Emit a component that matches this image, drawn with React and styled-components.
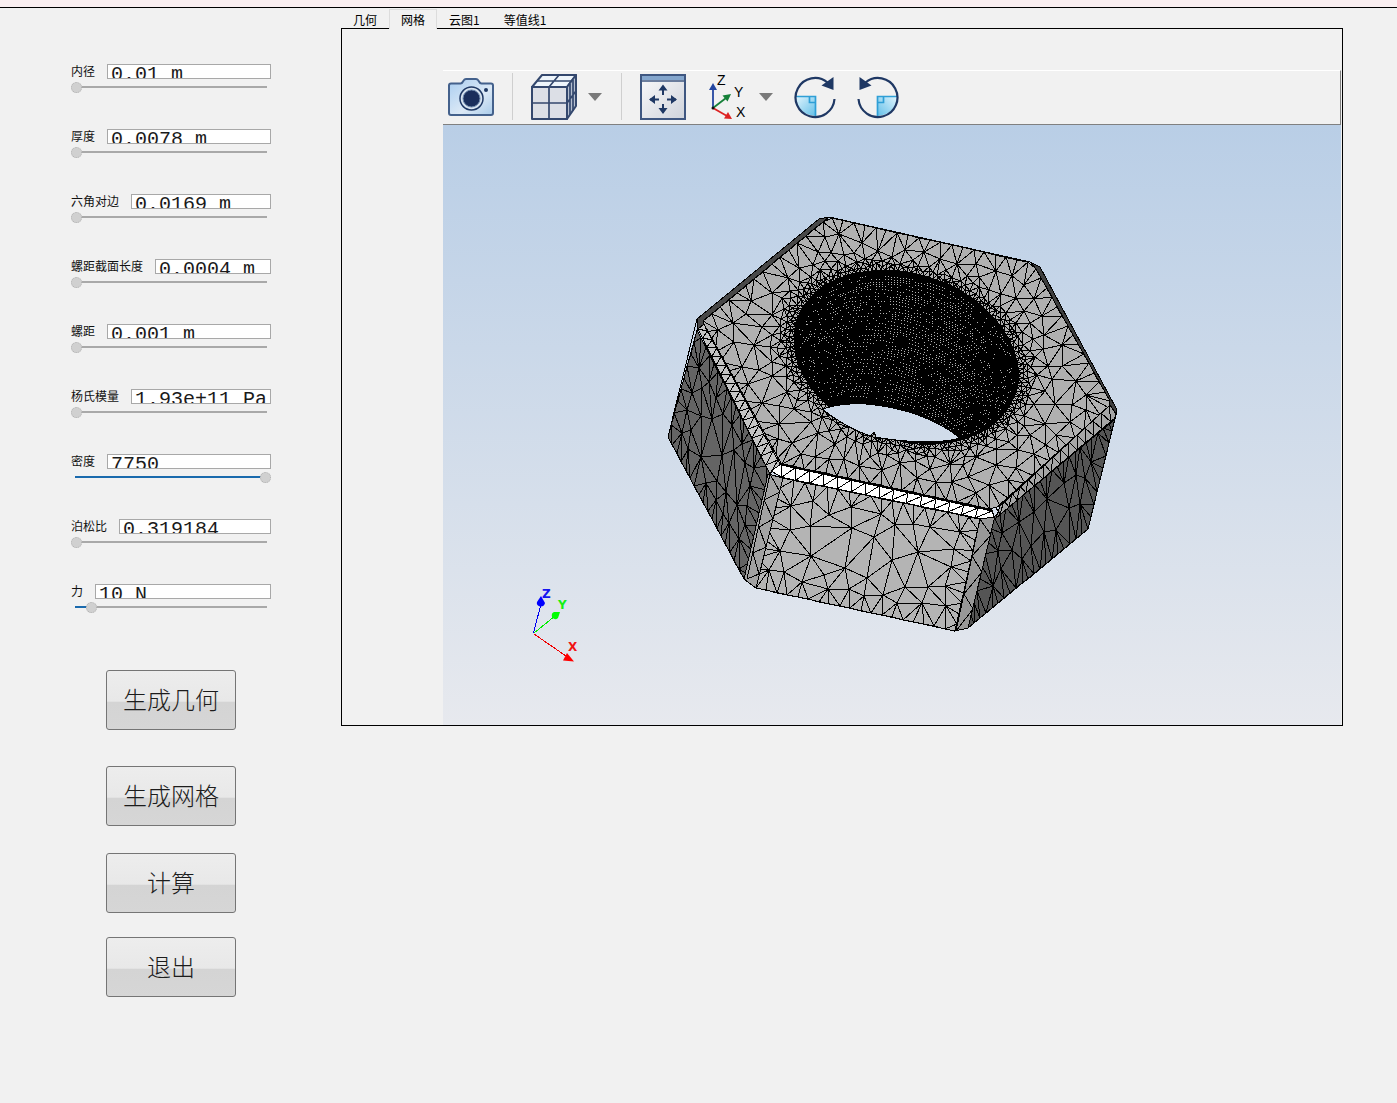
import React from "react";
import styled, { createGlobalStyle } from "styled-components";

const ui = `"Noto Sans CJK SC", "Liberation Sans", sans-serif`;

const GlobalStyle = createGlobalStyle`
  * { box-sizing: border-box; }
  body { margin: 0; background: #f1f1f1; color: #111; font: 12px/16px ${ui}; }
  button, input { font-family: inherit; margin: 0; }
`;

/* ---------- mesh generation ---------- */

function makeRandom(seed) {
  let s = seed;
  return () => {
    s = (s * 1664525 + 1013904223) >>> 0;
    return s / 4294967296;
  };
}

const HOLE = { x: 906, y: 357, a: 115, b: 83, t: (19 * Math.PI) / 180 };

function holePoint(angle, scale = 1, dx = 0, dy = 0) {
  const u = HOLE.a * scale * Math.cos(angle);
  const v = HOLE.b * scale * Math.sin(angle);
  const c = Math.cos(HOLE.t);
  const s = Math.sin(HOLE.t);
  return [HOLE.x + dx + u * c - v * s, HOLE.y + dy + u * s + v * c];
}

function holeRatio(x, y) {
  const c = Math.cos(HOLE.t);
  const s = Math.sin(HOLE.t);
  const dx = x - HOLE.x;
  const dy = y - HOLE.y;
  return Math.hypot((dx * c + dy * s) / HOLE.a, (dy * c - dx * s) / HOLE.b);
}

function inside(poly, x, y) {
  let hit = false;
  for (let i = 0, j = poly.length - 1; i < poly.length; j = i++) {
    const [xi, yi] = poly[i];
    const [xj, yj] = poly[j];
    if (yi > y !== yj > y && x < ((xj - xi) * (y - yi)) / (yj - yi) + xi) hit = !hit;
  }
  return hit;
}

function edgeDistance(poly, x, y) {
  let best = Infinity;
  for (let i = 0, j = poly.length - 1; i < poly.length; j = i++) {
    const [ax, ay] = poly[j];
    const [bx, by] = poly[i];
    const l = (bx - ax) ** 2 + (by - ay) ** 2;
    const t = Math.max(0, Math.min(1, ((x - ax) * (bx - ax) + (y - ay) * (by - ay)) / l));
    best = Math.min(best, Math.hypot(x - ax - t * (bx - ax), y - ay - t * (by - ay)));
  }
  return best;
}

/* Sweep-line Delaunay triangulation */
function circum(p, i, j, k) {
  const [ax, ay] = p[i];
  const [bx, by] = p[j];
  const [cx, cy] = p[k];
  const d = 2 * (ax * (by - cy) + bx * (cy - ay) + cx * (ay - by)) || 1e-9;
  const a2 = ax * ax + ay * ay;
  const b2 = bx * bx + by * by;
  const c2 = cx * cx + cy * cy;
  const x = (a2 * (by - cy) + b2 * (cy - ay) + c2 * (ay - by)) / d;
  const y = (a2 * (cx - bx) + b2 * (ax - cx) + c2 * (bx - ax)) / d;
  return { i, j, k, x, y, r: (ax - x) ** 2 + (ay - y) ** 2 };
}

function delaunay(points) {
  const n = points.length;
  const p = points.concat([[-20000, -10000], [900, 30000], [22000, -10000]]);
  const order = points.map((_, i) => i).sort((a, b) => p[a][0] - p[b][0]);
  let open = [circum(p, n, n + 1, n + 2)];
  const closed = [];
  for (const c of order) {
    const [x, y] = p[c];
    const edges = new Map();
    const keep = [];
    for (const t of open) {
      const dx = x - t.x;
      if (dx > 0 && dx * dx > t.r) {
        closed.push(t);
        continue;
      }
      if (dx * dx + (y - t.y) ** 2 - t.r > 1e-7) {
        keep.push(t);
        continue;
      }
      for (const [a, b] of [[t.i, t.j], [t.j, t.k], [t.k, t.i]]) {
        const key = Math.min(a, b) * 100000 + Math.max(a, b);
        if (edges.has(key)) edges.set(key, null);
        else edges.set(key, [a, b]);
      }
    }
    open = keep;
    edges.forEach((e) => e && open.push(circum(p, e[0], e[1], c)));
  }
  return closed.concat(open).filter((t) => t.i < n && t.j < n && t.k < n);
}

function meshPath({ poly, size, sx = 1, sy = 1, hole = false, seed = 7, tries = 9000 }) {
  const rnd = makeRandom(seed);
  const pts = [];
  const cells = new Map();
  const cell = 8;
  const add = (x, y) => {
    const q = [x * sx + rnd() * 0.01, y * sy + rnd() * 0.01];
    pts.push(q);
    const key = Math.floor(q[0] / cell) + "," + Math.floor(q[1] / cell);
    if (!cells.has(key)) cells.set(key, []);
    cells.get(key).push(q);
  };
  const free = (x, y, h) => {
    const qx = x * sx;
    const qy = y * sy;
    const cx = Math.floor(qx / cell);
    const cy = Math.floor(qy / cell);
    const m = Math.ceil(h / cell);
    for (let i = cx - m; i <= cx + m; i++)
      for (let j = cy - m; j <= cy + m; j++)
        for (const q of cells.get(i + "," + j) || [])
          if ((q[0] - qx) ** 2 + (q[1] - qy) ** 2 < h * h) return false;
    return true;
  };
  poly.forEach(([ax, ay], i) => {
    const [bx, by] = poly[(i + 1) % poly.length];
    const len = Math.hypot((bx - ax) * sx, (by - ay) * sy);
    const count = Math.max(1, Math.round(len / size((ax + bx) / 2, (ay + by) / 2)));
    for (let k = 0; k < count; k++) add(ax + ((bx - ax) * k) / count, ay + ((by - ay) * k) / count);
  });
  if (hole) for (let i = 0; i < 160; i++) add(...holePoint((i / 160) * Math.PI * 2));
  const xs = poly.map((q) => q[0]);
  const ys = poly.map((q) => q[1]);
  const x0 = Math.min(...xs);
  const y0 = Math.min(...ys);
  const w = Math.max(...xs) - x0;
  const h = Math.max(...ys) - y0;
  for (let i = 0; i < tries; i++) {
    const x = x0 + rnd() * w;
    const y = y0 + rnd() * h;
    if (!inside(poly, x, y) || (hole && holeRatio(x, y) < 1.01)) continue;
    const s = size(x, y);
    if (edgeDistance(poly, x, y) * Math.min(sx, sy) < s * 0.55) continue;
    if (free(x, y, s * 0.88)) add(x, y);
  }
  const seen = new Set();
  let d = "";
  for (const t of delaunay(pts)) {
    const gx = (pts[t.i][0] + pts[t.j][0] + pts[t.k][0]) / 3 / sx;
    const gy = (pts[t.i][1] + pts[t.j][1] + pts[t.k][1]) / 3 / sy;
    if (!inside(poly, gx, gy) || (hole && holeRatio(gx, gy) < 1)) continue;
    for (const [a, b] of [[t.i, t.j], [t.j, t.k], [t.k, t.i]]) {
      const key = Math.min(a, b) * 100000 + Math.max(a, b);
      if (seen.has(key)) continue;
      seen.add(key);
      const r = (q) => Math.round(q[0] / sx) + " " + Math.round(q[1] / sy);
      d += "M" + r(pts[a]) + "L" + r(pts[b]);
    }
  }
  return d;
}

/* Zigzag of triangles between two edges */
function stripPath(a0, a1, b0, b1, count) {
  const at = (p, q, t) => Math.round(p[0] + (q[0] - p[0]) * t) + " " + Math.round(p[1] + (q[1] - p[1]) * t);
  let d = "M" + at(a0, a1, 0) + "L" + at(a0, a1, 1) + "M" + at(b0, b1, 0) + "L" + at(b0, b1, 1);
  for (let i = 0; i < count; i++) {
    d += "M" + at(a0, a1, i / count) + "L" + at(b0, b1, (i + 0.5) / count) + "L" + at(a0, a1, (i + 1) / count);
  }
  return d;
}

function threadDots() {
  const rnd = makeRandom(21);
  let d = "";
  for (let k = 2; k < 46; k++) {
    const t = k / 46;
    const scale = 1 - 0.08 * t;
    const count = 236 - k;
    for (let i = 0; i < count; i++) {
      const a = (i / count) * Math.PI * 2 + k * 0.013;
      const [x, y] = holePoint(a, scale, -30 * t, 122 * t + Math.sin(a * 7 + k) * 0.8);
      if (holeRatio(x, y) > 0.965) continue;
      if (Math.sin(a + HOLE.t) > 0.35) continue;
      const side = Math.min(1, (x - 795) / 100) * Math.min(1, (1018 - x) / 70);
      const wave = 0.78 + 0.22 * Math.sin(x * 0.11 + y * 0.17 + Math.sin(y * 0.09) * 2);
      if (rnd() > (0.14 + 0.76 * side) * wave) continue;
      d += "M" + Math.round(x) + " " + Math.round(y) + "h1v1h-1z";
    }
  }
  return d;
}

const TOP = [[703, 321], [823, 222], [832, 218], [1028, 262], [1036, 269], [1110, 401], [1109, 408], [1000, 506], [990, 509], [782, 464], [775, 461], [704, 332]];
const LEFT = [[697, 330], [770, 474], [766, 490], [747, 574], [743, 577], [668, 437]];
const FRONT = [[783, 478], [980, 519], [957, 624], [955, 631], [756, 588], [750, 578]];
const RIGHT = [[994, 517], [1115, 419], [1088, 529], [968, 628]];
const CORNER_L = [[768, 474], [783, 478], [756, 588], [744, 579]];
const CORNER_R = [[980, 519], [995, 516], [968, 628], [955, 631]];

const faceSize = (poly, low, high) => (x, y) => Math.min(high, low + edgeDistance(poly, x, y) * 0.4);

const faces = [
  { poly: [[697, 319], [819, 219], [829, 217], [823, 222], [703, 321], [704, 332], [698, 330]], fill: "#484848" },
  { poly: [[1030, 262], [1040, 267], [1116, 408], [1116, 414], [1110, 407], [1036, 269]], fill: "#3f3f3f" },
  {
    poly: LEFT,
    fill: "#646464",
    d: meshPath({ poly: LEFT, sx: 1.8, sy: 0.7, size: faceSize(LEFT, 10, 23), seed: 11 }),
  },
  {
    poly: FRONT,
    fill: "#b4b4b4",
    d: meshPath({ poly: FRONT, size: faceSize(FRONT, 11, 29), seed: 5 }),
  },
  {
    poly: RIGHT,
    fill: "#555555",
    d: meshPath({ poly: RIGHT, sx: 1.6, sy: 0.7, size: faceSize(RIGHT, 10, 23), seed: 31 }),
  },
  { poly: CORNER_L, fill: "#a2a2a2", d: stripPath([770, 474], [747, 579], [783, 478], [756, 588], 4) },
  { poly: CORNER_R, fill: "#989898", d: stripPath([980, 519], [956, 631], [995, 516], [968, 628], 3) },
  {
    poly: TOP,
    fill: "#b0b0b0",
    d: meshPath({
      poly: TOP,
      hole: true,
      seed: 3,
      tries: 90000,
      size: (x, y) => {
        const grow = 4 + Math.max(0, holeRatio(x, y) - 1.06) * 48;
        const rim = 11 + edgeDistance(TOP, x, y) * 0.35;
        return Math.min(grow, rim, 18);
      },
    }),
  },
  {
    poly: [[698, 329], [704, 324], [781, 463], [770, 474]],
    fill: "#c4c4c4",
    d: stripPath([698, 329], [770, 474], [705, 327], [780, 464], 16),
  },
  {
    poly: [[1000, 506], [1110, 405], [1116, 414], [1114, 420], [996, 518]],
    fill: "#a6a6a6",
    d: stripPath([996, 508], [1109, 406], [996, 518], [1115, 418], 14),
  },
  {
    poly: [[781, 464], [992, 510], [994, 517], [980, 519], [783, 478], [771, 471]],
    fill: "#ffffff",
    d: stripPath([781, 465], [992, 511], [775, 476], [982, 519], 15),
  },
];

const OUTLINE =
  "M697 319L819 219L829 217L1030 262L1040 267L1116 408L1116 414L1088 529L968 628L955 631L756 588L744 579L668 437Z";
const OPENING =
  "M822 409C835 405 850 403 866 404C904 407 938 420 960 438C950 441 935 442 920 442C905 441 890 440 876 437L874 432L870 436C850 429 836 420 822 409Z";
const DOTS = threadDots();

function Model() {
  return (
    <Scene viewBox="443 125 898 600" role="img" aria-label="网格">
      <defs>
        <linearGradient id="sky" gradientUnits="userSpaceOnUse" x1="0" y1="125" x2="0" y2="725">
          <stop offset="0" stopColor="#b9cee6" />
          <stop offset="1" stopColor="#e7e9ee" />
        </linearGradient>
      </defs>
      <g shapeRendering="crispEdges" strokeWidth="1">
        {faces.map((f, i) => (
          <g key={i}>
            <polygon points={f.poly.join(" ")} fill={f.fill} stroke="#000" />
            {f.d && <path d={f.d} fill="none" stroke="#000" />}
          </g>
        ))}
        <ellipse
          cx={HOLE.x}
          cy={HOLE.y}
          rx={HOLE.a}
          ry={HOLE.b}
          transform={`rotate(19 ${HOLE.x} ${HOLE.y})`}
          fill="#000"
        />
        <path d={DOTS} fill="#b2b2b2" />
        <path d={OPENING} fill="url(#sky)" stroke="#000" />
        <path d={OUTLINE} fill="none" stroke="#000" />
        <path d="M533.5 633L541 604" stroke="#0000f0" />
        <path d="M534 633L555 616" stroke="#00f000" />
        <path d="M534 634L566 656" stroke="#f00000" />
      </g>
      <path d="M541 596L545 603Q544 607 540 606.500Q536 605 537 602Z" fill="#0000ff" />
      <path d="M560 612L558 618Q555 621 552 617Q551 613 554 612Z" fill="#00ff00" />
      <path d="M574 661.500L563 660.500L567 653Z" fill="#ff0000" />
      <AxisText x="542" y="598" fill="#1414f0">Z</AxisText>
      <AxisText x="558" y="609" fill="#14f014">Y</AxisText>
      <AxisText x="568" y="651" fill="#f01414">X</AxisText>
    </Scene>
  );
}

/* ---------- toolbar icons ---------- */

const NAVY = "#1f3864";

const CameraIcon = () => (
  <svg width="46" height="46" viewBox="0 0 46 46" fill="none">
    <defs>
      <linearGradient id="cam" x1="0" y1="0" x2="1" y2="1">
        <stop offset="0" stopColor="#a9cdf0" />
        <stop offset="0.6" stopColor="#dce9f6" />
        <stop offset="1" stopColor="#a9cbea" />
      </linearGradient>
    </defs>
    <path d="M3 9.500h9.500q1.500 0 2.500-2l1-1.500q.5-1 2-1h10q1.500 0 2 1l1 1.500q1 2 2.500 2H43q2 0 2 2V39q0 2-2 2H3q-2 0-2-2V11.500q0-2 2-2z" fill="url(#cam)" stroke="#44618c" strokeWidth="2" />
    <circle cx="23.500" cy="24.500" r="11.500" fill="#d8e4f0" stroke={NAVY} strokeWidth="1.500" />
    <circle cx="23.500" cy="24.500" r="8.500" fill="#1b2f5c" stroke="#6d88ab" strokeWidth="1" />
    <circle cx="38" cy="16" r="2" fill={NAVY} />
  </svg>
);

const CubeIcon = () => (
  <svg width="46" height="46" viewBox="0 0 46 46" fill="none" stroke="#34486e" strokeWidth="2" strokeLinejoin="round">
    <path d="M1 13L11 1H45L36 13Z" fill="#eef5fb" />
    <path d="M36 13L45 1V32L36 45Z" fill="#b5bfd0" />
    <path d="M1 13H36V45H1Z" fill="#dcdfe6" />
    <path d="M18 13V45M1 29H36M18 13L28 1M6 7H40.500M39 10V41M42 6V37M36 29L45 17" strokeWidth="1.700" />
  </svg>
);

const FitIcon = () => (
  <svg width="46" height="46" viewBox="0 0 46 46">
    <defs>
      <linearGradient id="fit" x1="0" y1="0" x2="1" y2="1">
        <stop offset="0" stopColor="#fafafb" />
        <stop offset="1" stopColor="#cfd3db" />
      </linearGradient>
    </defs>
    <rect x="1" y="1" width="44" height="44" fill="url(#fit)" stroke="#3f5781" strokeWidth="2" />
    <path d="M2 2H44V6H2Z" fill="#84a6cd" />
    <path d="M2 7H44" stroke="#3f5781" strokeWidth="1.500" />
    <path d="M23 12v9M23 30v9M10 25.500h9M27 25.500h9" stroke={NAVY} strokeWidth="2" />
    <path d="M23 10.500l4.500 6h-9zM23 40l4.500-6h-9zM9 25.500l6-4.500v9zM37 25.500l-6-4.500v9z" fill={NAVY} />
  </svg>
);

const AxesIcon = () => (
  <AxesSvg width="44" height="46" viewBox="0 0 44 46">
    <path d="M9 34V15" stroke="#2446a0" strokeWidth="1.800" />
    <path d="M9 9l4 7H5z" fill="#2446a0" />
    <path d="M9 34L22 24" stroke="#158038" strokeWidth="1.800" />
    <path d="M27 20l-3.500 7.500-5-6z" fill="#158038" />
    <path d="M9 34L23 42" stroke="#dd2222" strokeWidth="1.800" />
    <path d="M28 45l-8-.500 4-6.500z" fill="#dd2222" />
    <circle cx="9" cy="34" r="1.500" fill="#111" />
    <IconText x="13" y="11">Z</IconText>
    <IconText x="30" y="23">Y</IconText>
    <IconText x="32" y="43">X</IconText>
  </AxesSvg>
);

const RotateIcon = ({ flip }) => (
  <svg width="46" height="46" viewBox="0 0 46 46">
    <defs>
      <linearGradient id="quad" x1="0" y1="0" x2="1" y2="1">
        <stop offset="0" stopColor="#e2f5fd" />
        <stop offset="1" stopColor="#63bfe8" />
      </linearGradient>
    </defs>
    <g transform={flip ? "translate(45 0) scale(-1 1)" : undefined}>
      <path d="M23.500 22H4Q4 40 23.500 42Z" fill="url(#quad)" />
      <path d="M4 22.500H23.500V42M17.500 22.500V28.500H23.500" fill="none" stroke="#2f9fd6" strokeWidth="1.700" />
      <path d="M35.500 8.500A19.500 19.500 0 1 0 42.500 25" fill="none" stroke={NAVY} strokeWidth="2.200" />
      <path d="M41.500 3V16L29.500 11.500Z" fill={NAVY} />
    </g>
  </svg>
);

const Caret = () => (
  <svg width="16" height="10" viewBox="0 0 16 10">
    <path d="M1 1H15L8 9Z" fill="#7a7a7a" />
  </svg>
);

/* ---------- layout ---------- */

const Page = styled.div`
  display: flex;
  flex-direction: column;
`;
const TitleStrip = styled.header`
  height: 8px;
  background: #faeff1;
  border-bottom: 1px solid #000;
`;
const Main = styled.main`
  display: grid;
  grid-template-columns: 341px minmax(0, 1fr);
  padding-right: 54px;
`;
const Sidebar = styled.aside`
  display: flex;
  flex-direction: column;
  padding: 56px 70px 40px 71px;
`;
const Form = styled.form`
  display: flex;
  flex-direction: column;
  gap: 36px;
`;
const Field = styled.div`
  display: flex;
  flex-direction: column;
  gap: 3px;
`;
const FieldHead = styled.div`
  display: flex;
  gap: 12px;
  height: 15px;
`;
const FieldLabel = styled.label`
  flex: none;
  line-height: 14px;
`;
const ValueInput = styled.input`
  flex: 1;
  min-width: 0;
  height: 15px;
  padding: 7px 3px 0;
  border: 1px solid #a8a8a8;
  border-radius: 0;
  outline: 0;
  background: #fff;
  color: #1a1a1a;
  font: 20px/24px "Liberation Mono", monospace;
`;
const Slider = styled.input`
  appearance: none;
  width: 100%;
  height: 11px;
  outline: 0;
  background: linear-gradient(to right, #1a6aad ${(p) => p.$fill}%, #a9a9a9 ${(p) => p.$fill}%) 4px 4px /
    calc(100% - 8px) 2px no-repeat;
  &::-webkit-slider-thumb {
    appearance: none;
    width: 11px;
    height: 11px;
    border: 1px dotted #b0b0b0;
    border-radius: 50%;
    background: #d0d0d0;
  }
`;
const Actions = styled.div`
  display: flex;
  flex-direction: column;
  align-items: center;
  padding-top: 57px;
`;
const ActionButton = styled.button`
  width: 130px;
  height: 60px;
  margin-top: ${(p) => p.$space}px;
  padding: 0 0 2px;
  border: 1px solid #757575;
  border-radius: 3px;
  background: linear-gradient(#ededed, #e8e8e8 52%, #d4d4d4 54%, #d6d6d6);
  color: #1c1c1c;
  font-size: 24px;
  font-weight: 300;
  line-height: 32px;
`;
const Workspace = styled.section`
  display: flex;
  flex-direction: column;
  min-width: 0;
  padding-top: 1px;
`;
const TabBar = styled.div`
  display: flex;
  height: 19px;
`;
const Tab = styled.button`
  height: 20px;
  padding: 0 11px;
  border: 1px solid ${(p) => (p.$active ? "#dcdcdc" : "transparent")};
  border-bottom: 0;
  background: ${(p) => (p.$active ? "#f1f1f1" : "transparent")};
  color: #000;
  font-size: 12px;
  line-height: 16px;
  z-index: ${(p) => (p.$active ? 1 : 0)};
`;
const Panel = styled.div`
  border: 1px solid #000;
  padding: 41px 1px 0 101px;
`;
const Toolbar = styled.div`
  display: flex;
  align-items: center;
  gap: 18px;
  height: 55px;
  padding: 0 0 2px 5px;
  border-top: 1px solid #fff;
  border-right: 1px solid #808080;
  border-bottom: 1px solid #808080;
`;
const ToolButton = styled.button`
  display: flex;
  align-items: center;
  gap: 10px;
  padding: 0;
  border: 0;
  background: none;
`;
const Divider = styled.span`
  width: 1px;
  height: 47px;
  background: #cfcfcf;
`;
const Viewport = styled.div`
  height: 600px;
  background: linear-gradient(#b9cee6, #e7e9ee);
`;
const Scene = styled.svg`
  display: block;
  width: 100%;
  height: 100%;
`;
const AxesSvg = styled.svg`
  overflow: visible;
`;
const AxisText = styled.text`
  font: bold 12px "DejaVu Sans", sans-serif;
`;
const IconText = styled.text`
  font: 14px "Liberation Sans", sans-serif;
`;

const fields = [
  { label: "内径", value: "0.01 m", level: 0 },
  { label: "厚度", value: "0.0078 m", level: 0 },
  { label: "六角对边", value: "0.0169 m", level: 0 },
  { label: "螺距截面长度", value: "0.0004 m", level: 0 },
  { label: "螺距", value: "0.001 m", level: 0 },
  { label: "杨氏模量", value: "1.93e+11 Pa", level: 0 },
  { label: "密度", value: "7750", level: 100 },
  { label: "泊松比", value: "0.319184", level: 0 },
  { label: "力", value: "10 N", level: 8 },
];
const actions = [
  { text: "生成几何", space: 0 },
  { text: "生成网格", space: 36 },
  { text: "计算", space: 27 },
  { text: "退出", space: 24 },
];
const tabs = ["几何", "网格", "云图1", "等值线1"];

export default function App() {
  const [active, setActive] = React.useState("网格");
  const [levels, setLevels] = React.useState(fields.map((f) => f.level));
  const change = (i, v) => setLevels(levels.map((l, k) => (k === i ? Number(v) : l)));
  return (
    <>
      <GlobalStyle />
      <Page>
        <TitleStrip />
        <Main>
          <Sidebar>
            <Form>
              {fields.map((f, i) => (
                <Field key={f.label}>
                  <FieldHead>
                    <FieldLabel htmlFor={"value-" + i}>{f.label}</FieldLabel>
                    <ValueInput id={"value-" + i} defaultValue={f.value} />
                  </FieldHead>
                  <Slider
                    type="range"
                    aria-label={f.label}
                    value={levels[i]}
                    $fill={levels[i]}
                    onChange={(e) => change(i, e.target.value)}
                  />
                </Field>
              ))}
            </Form>
            <Actions>
              {actions.map((a) => (
                <ActionButton key={a.text} type="button" $space={a.space}>
                  {a.text}
                </ActionButton>
              ))}
            </Actions>
          </Sidebar>
          <Workspace>
            <TabBar role="tablist">
              {tabs.map((t) => (
                <Tab key={t} role="tab" aria-selected={t === active} $active={t === active} onClick={() => setActive(t)}>
                  {t}
                </Tab>
              ))}
            </TabBar>
            <Panel role="tabpanel">
              <Toolbar role="toolbar">
                <ToolButton aria-label="截图"><CameraIcon /></ToolButton>
                <Divider />
                <ToolButton aria-label="显示"><CubeIcon /><Caret /></ToolButton>
                <Divider />
                <ToolButton aria-label="适应窗口"><FitIcon /></ToolButton>
                <ToolButton aria-label="视角"><AxesIcon /><Caret /></ToolButton>
                <ToolButton aria-label="顺时针旋转"><RotateIcon /></ToolButton>
                <ToolButton aria-label="逆时针旋转"><RotateIcon flip /></ToolButton>
              </Toolbar>
              <Viewport>
                <Model />
              </Viewport>
            </Panel>
          </Workspace>
        </Main>
      </Page>
    </>
  );
}
